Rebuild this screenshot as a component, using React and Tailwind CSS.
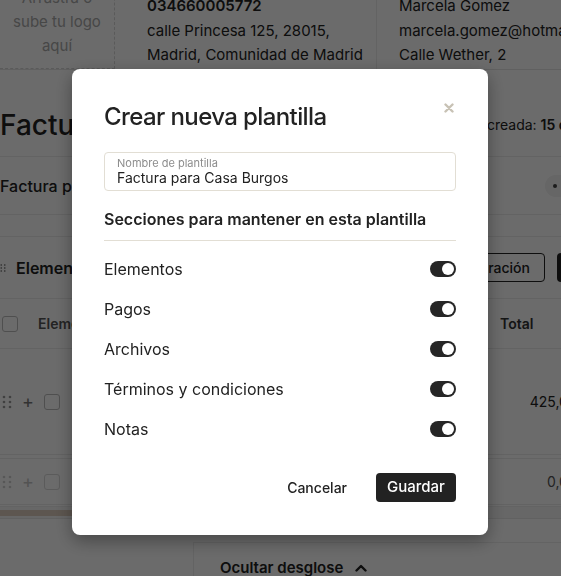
import { useState } from 'react'

const sections = ['Elementos', 'Pagos', 'Archivos', 'Términos y condiciones', 'Notas']

function DragDots({ className = '' }) {
  return (
    <svg width="10" height="16" viewBox="0 0 10 16" className={className} fill="currentColor">
      <circle cx="2" cy="3" r="1.3" />
      <circle cx="8" cy="3" r="1.3" />
      <circle cx="2" cy="8" r="1.3" />
      <circle cx="8" cy="8" r="1.3" />
      <circle cx="2" cy="13" r="1.3" />
      <circle cx="8" cy="13" r="1.3" />
    </svg>
  )
}

function Toggle({ on, onChange }) {
  return (
    <button
      type="button"
      onClick={onChange}
      className={
        on
          ? 'flex h-4 w-[26px] items-center justify-end rounded-full bg-[#262626] px-[2px]'
          : 'flex h-4 w-[26px] items-center justify-start rounded-full bg-[#c9c9c9] px-[2px]'
      }
    >
      <span className="block h-3 w-3 rounded-full bg-white" />
    </button>
  )
}

function InvoicePage() {
  return (
    <div className="w-[620px] bg-white text-[#222]">
      {/* emisor / cliente */}
      <div className="-mt-[17px] flex h-[87px] border-b border-[#e4e4e4]">
        <div className="flex w-[115px] flex-col items-center border-r border-b border-dashed border-[#d6d6d6] pt-[3px] text-[15px] leading-6 text-[#a9a9a9]">
          <span>Arrastra o</span>
          <span>sube tu logo</span>
          <span>aquí</span>
        </div>
        <div className="w-[262px] border-r border-[#ececec] pt-[11px] pl-8 text-[15px] leading-[24.5px] whitespace-nowrap">
          <p className="font-semibold">034660005772</p>
          <p>calle Princesa 125, 28015,</p>
          <p>Madrid, Comunidad de Madrid</p>
        </div>
        <div className="pt-[11px] pl-[22px] text-[15px] leading-[24.5px] whitespace-nowrap">
          <p>Marcela Gomez</p>
          <p>marcela.gomez@hotmail.com</p>
          <p>Calle Wether, 2</p>
        </div>
      </div>

      {/* titulo */}
      <div className="flex h-[87px] items-center border-b border-[#ececec] pt-6">
        <h1 className="w-[443px] shrink-0 text-[28px] font-medium">Factura FAC-0012</h1>
        <p className="text-sm whitespace-nowrap">
          Fecha creada: <span className="font-semibold">15 de marzo</span>
        </p>
      </div>

      <div className="flex h-[57px] items-center">
        <p className="w-[545px] shrink-0 text-[16px] font-medium">Factura para Casa Burgos</p>
        <span className="flex shrink-0 items-center gap-1 rounded-full bg-[#f2f2f2] px-2 py-[3px] text-xs">
          <span className="h-1 w-1 rounded-full bg-[#444]" />
          Borrador
        </span>
      </div>
      <div className="h-[23px] border-y border-[#ececec]" />

      {/* elementos */}
      <div className="flex h-[62px] items-center border-b border-[#ececec]">
        <DragDots className="w-[6px] shrink-0 text-[#555]" />
        <h2 className="ml-[10px] w-[404px] shrink-0 text-[16px] font-semibold">Elementos</h2>
        <button type="button" className="h-[29px] w-[125px] shrink-0 rounded-[4px] border border-[#222] text-sm font-medium">
          Configuración
        </button>
        <button type="button" className="ml-3 h-[29px] w-[90px] shrink-0 rounded-[4px] bg-[#222] text-sm text-white">
          Añadir
        </button>
      </div>

      <div className="grid h-[50px] grid-cols-[38px_462px_90px] items-center border-b border-[#ececec] text-sm font-semibold text-[#555]">
        <span className="ml-[2px] h-4 w-4 rounded-[3px] border border-[#bdbdbd] bg-white" />
        <span>Elementos</span>
        <span className="text-[#333]">Total</span>
      </div>

      <div className="grid h-[105px] grid-cols-[500px_90px] items-center text-sm">
        <div className="flex items-center">
          <DragDots className="ml-[2px] text-[#9a9a9a]" />
          <span className="ml-[10px] text-[18px] leading-none text-[#777]">+</span>
          <span className="ml-[10px] h-4 w-4 rounded-[3px] border border-[#bdbdbd] bg-white" />
        </div>
        <span className="text-right">425,00 €</span>
      </div>
      <div className="h-[5px] border-y border-[#ececec]" />
      <div className="grid h-[45px] grid-cols-[500px_90px] items-center text-sm">
        <div className="flex items-center">
          <DragDots className="ml-[2px] text-[#cfcfcf]" />
          <span className="ml-[10px] text-[18px] leading-none text-[#c6c6c6]">+</span>
          <span className="ml-[10px] h-4 w-4 rounded-[3px] border border-[#dadada] bg-white" />
        </div>
        <span className="text-right text-[#555]">0,00 €</span>
      </div>
      <div className="h-[3px] border-y border-[#ececec]" />
      <div className="h-[12px] border-b border-[#e8e8e8] bg-[#f6f6f6] py-[3px]">
        <div className="h-[6px] w-[200px] bg-[#ddcdbe]" />
      </div>

      <div className="mt-[23px] ml-[193px] h-[40px] border-t border-l border-[#ededed] pt-[14px] pl-[26px]">
        <button type="button" className="flex items-center gap-3 text-[15px] font-semibold">
          Ocultar desglose
          <svg width="12" height="8" viewBox="0 0 12 8" fill="none" stroke="currentColor" strokeWidth="2.4" strokeLinecap="round" strokeLinejoin="round">
            <path d="M1.5 6.5 6 2l4.5 4.5" />
          </svg>
        </button>
      </div>
    </div>
  )
}

export default function App() {
  const [name, setName] = useState('Factura para Casa Burgos')
  const [keep, setKeep] = useState(sections.map(() => true))

  return (
    <div className="relative h-[576px] w-[561px] overflow-hidden font-['Inter',sans-serif]">
      <InvoicePage />

      <div className="fixed inset-0 flex bg-black/[0.58] pt-[69px] pl-[72px]">
        <div className="h-[466px] w-[416px] rounded-lg bg-white px-8 pt-[32px] pb-[33px] text-[#222] shadow-[0_6px_18px_rgba(0,0,0,0.35)]">
          <div className="flex items-start justify-between">
            <h2 className="text-[24px] leading-8 font-medium tracking-tight">Crear nueva plantilla</h2>
            <button type="button" className="mt-[2px] mr-[2px] text-[#c8c2b5]">
              <svg width="10" height="10" viewBox="0 0 10 10" stroke="currentColor" strokeWidth="2.4" strokeLinecap="round">
                <path d="M1.5 1.5 8.5 8.5M8.5 1.5 1.5 8.5" />
              </svg>
            </button>
          </div>

          <label className="mt-[19px] flex h-[39px] flex-col justify-center rounded-[4px] border border-[#e2ded4] px-3">
            <span className="text-[11px] leading-[12px] text-[#8c8c8c]">Nombre de plantilla</span>
            <input
              value={name}
              onChange={e => setName(e.target.value)}
              className="text-sm leading-[17px] text-[#222] outline-none"
            />
          </label>

          <h3 className="mt-4 border-b border-[#e2ded4] pb-[9px] text-[16px] leading-6 font-semibold">
            Secciones para mantener en esta plantilla
          </h3>

          <ul className="mt-[8px]">
            {sections.map((s, i) => (
              <li key={s} className="flex h-10 items-center justify-between text-[16px]">
                <span>{s}</span>
                <Toggle on={keep[i]} onChange={() => setKeep(keep.map((v, j) => (j === i ? !v : v)))} />
              </li>
            ))}
          </ul>

          <div className="mt-6 flex items-center justify-end gap-[29px]">
            <button type="button" className="text-sm font-medium">Cancelar</button>
            <button type="button" className="h-[29px] w-20 rounded-[4px] bg-[#222] text-[15px] font-medium text-white">
              Guardar
            </button>
          </div>
        </div>
      </div>
    </div>
  )
}
